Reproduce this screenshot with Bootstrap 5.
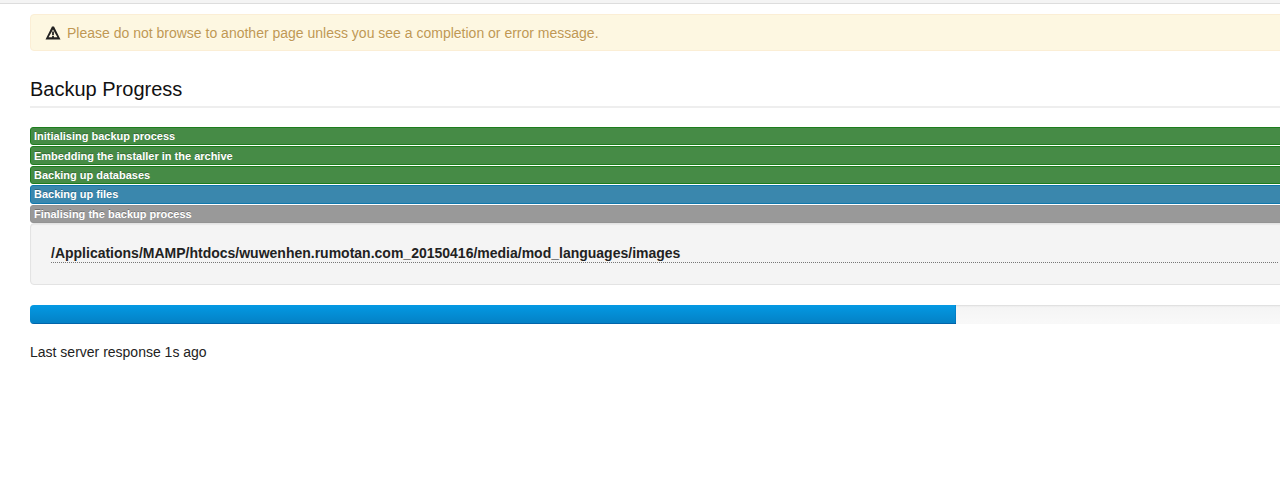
<!DOCTYPE html>
<html lang="en">
<head>
<meta charset="utf-8">
<meta name="viewport" content="width=device-width, initial-scale=1">
<title>Backup Progress</title>
<link href="https://cdn.jsdelivr.net/npm/bootstrap@5.3.0/dist/css/bootstrap.min.css" rel="stylesheet">
<style>
body { font-family: "Liberation Sans", Arial, sans-serif; font-size: 14px; line-height: 20px; color: #222; background: #fff; overflow-x: hidden; }
.topbar { height: 4px; background: #f4f4f4; border-bottom: 1px solid #ddd; }
/* the content runs past the right edge of the window */
.backup-main { padding: 10px 0 20px 30px; margin-right: -19px; }
.notice { background: #fdf7e1; border: 1px solid #fbeed5; border-radius: 4px; color: #c09853; padding: 8px 14px 7px; margin-bottom: 24px; gap: 6px; }
.notice svg { width: 16px; height: 16px; color: #222; }
.notice span { text-shadow: 0 1px 0 rgba(255,255,255,.5); }
.section-title { font-size: 20px; line-height: 28px; font-weight: 400; color: #111; border-bottom: 2px solid #eee; padding-bottom: 3px; margin-bottom: 19px; }
.steps { display: grid; grid-auto-rows: 1fr; gap: 1px; height: 96px; }
.step { font-size: 11px; line-height: 14px; font-weight: 700; color: #fff; padding: 1px 3px; border: 1px solid; border-radius: 3px; text-shadow: 0 -1px 0 rgba(0,0,0,.25); display: flex; align-items: center; }
.step-done { background: #468b46; border-color: #1d7d1d; }
.step-active { background: #3a87ad; border-color: #0f78ad; }
.step-waiting { background: #999; border-color: #939393; }
.detail { background: #f4f4f4; border: 1px solid #e3e3e3; border-radius: 4px; padding: 20px 20px 21px; margin-bottom: 20px; box-shadow: inset 0 1px 1px rgba(0,0,0,.05); }
.detail-path { line-height: 18px; font-weight: 700; border-bottom: 1px dotted #777; color: #222; }
.backup-bar { height: 19px; border-radius: 4px; background: linear-gradient(#f4f4f4, #f9f9f9); box-shadow: inset 0 1px 2px rgba(0,0,0,.1); margin-bottom: 18px; }
.backup-bar .progress-bar { background: linear-gradient(#0499e3, #0480c4); box-shadow: inset 0 -1px 0 rgba(0,50,120,.35), inset -1px 0 0 rgba(0,50,120,.15); }
</style>
</head>
<body>
<div class="topbar"></div>
<main class="backup-main">
  <div class="notice d-flex align-items-center" role="alert">
    <svg viewBox="0 0 16 16" fill="currentColor" fill-rule="evenodd" aria-hidden="true"><path d="M7 1.5H9L15.5 14.5H.5ZM8 4.6 3.6 12.2h8.8ZM7.1 6.5h1.8v3.6H7.1ZM7.1 10.8h1.8v1.4H7.1Z"/></svg>
    <span>Please do not browse to another page unless you see a completion or error message.</span>
  </div>
  <h1 class="section-title">Backup Progress</h1>
  <div class="steps">
    <div class="step step-done">Initialising backup process</div>
    <div class="step step-done">Embedding the installer in the archive</div>
    <div class="step step-done">Backing up databases</div>
    <div class="step step-active">Backing up files</div>
    <div class="step step-waiting">Finalising the backup process</div>
  </div>
  <div class="detail">
    <div class="detail-path">/Applications/MAMP/htdocs/wuwenhen.rumotan.com_20150416/media/mod_languages/images</div>
  </div>
  <div class="progress backup-bar" role="progressbar" aria-label="Backup progress" aria-valuenow="73" aria-valuemin="0" aria-valuemax="100">
    <div class="progress-bar" style="width: 73%"></div>
  </div>
  <p class="mb-0">Last server response 1s ago</p>
</main>
<script src="https://cdn.jsdelivr.net/npm/bootstrap@5.3.0/dist/js/bootstrap.bundle.min.js"></script>
</body>
</html>
